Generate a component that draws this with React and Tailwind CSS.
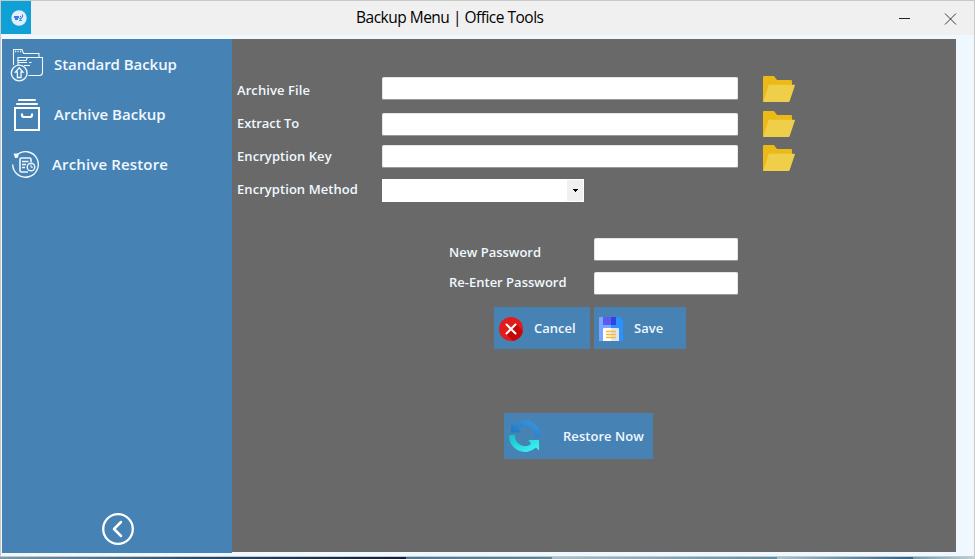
import React from "react";

function StandardBackupIcon() {
  return (
    <svg width="34" height="34" viewBox="0 0 34 34" fill="none" stroke="#f0f8ff" strokeWidth="1.100">
      <path d="M3.500 17V1.500H12L13.500 5.500H29V9" />
      <path d="M8 17V9.500H32.500V24.500Q32.500 27.500 29.500 27.500H18.500" />
      <path d="M5 3.500H6.200M7.500 3.500H8.700M10 3.500H11.200" strokeWidth="1.400" />
      <path d="M7.500 12.500H16L17.500 9.500M8 14.500H17M19 14.500H21.500M9.500 17.500H13M14 17.500H20" />
      <circle cx="9.200" cy="25" r="7.900" fill="#4682b4" strokeWidth="1.400" />
      <path d="M9.200 19.700L13 24H11V29.500H7.400V24H5.400Z" strokeWidth="1.300" />
    </svg>
  );
}

function ArchiveBoxIcon() {
  return (
    <svg width="28" height="34" viewBox="0 0 28 34" fill="none" stroke="#fff" strokeWidth="2">
      <path d="M6 2H22M4 6H24" strokeLinecap="round" />
      <path d="M2 10H26V32H2Z" />
      <path d="M9 15.500V17Q9 19 11 19H17Q19 19 19 17V15.500" strokeWidth="2.200" />
    </svg>
  );
}

function RestoreHistoryIcon() {
  return (
    <svg width="29" height="29" viewBox="0 0 29 29" fill="none" stroke="#f0f8ff" strokeWidth="1.400">
      <path d="M5.500 5.300A12.800 12.800 0 1 1 1.700 14.500" />
      <path d="M3.500 4.200L7 4.300L6.400 7L4.500 7.200Z" fill="#f0f8ff" />
      <path d="M20 12V9.500Q20 8 18.500 8H10.500Q9 8 9 9.500V20.500Q9 22 10.500 22H17" strokeWidth="1.600" />
      <path d="M11 11.500H17.500M11 14.500H15M11 17.500H14" />
      <circle cx="20" cy="17" r="3.800" fill="#4682b4" strokeWidth="1.400" />
      <path d="M20 14.500V17.200H22" strokeWidth="1" />
    </svg>
  );
}

function FolderIcon() {
  return (
    <svg width="32" height="26" viewBox="0 0 32 26" className="block">
      <path d="M0 1Q0 0 1 0H11L14 4H28Q29 4 29 5V10L3 25L0 26Z" fill="#ebba16" />
      <path d="M6.200 8.800H31.500Q32.200 8.800 31.900 9.600L26.600 25.200Q26.300 26 25.500 26H0.300L5.400 9.500Q5.600 8.800 6.200 8.800Z" fill="#efce4a" />
    </svg>
  );
}

function CancelIcon() {
  return (
    <svg width="24" height="24" viewBox="0 0 24 24">
      <circle cx="12" cy="12" r="12" fill="#e21b1b" />
      <path d="M17 7L24 14A12 12 0 0 1 14 23.900L7 17Z" fill="#c40808" />
      <path d="M7.500 7.500L16.500 16.500M16.500 7.500L7.500 16.500" stroke="#fff" strokeWidth="2" strokeLinecap="round" />
    </svg>
  );
}

function SaveIcon() {
  return (
    <svg width="24" height="24" viewBox="0 0 24 24">
      <path d="M0 0H12V24H0Z" fill="#77a5ff" />
      <path d="M12 0H20.500L24 3.500V24H12Z" fill="#2b91ff" />
      <path d="M4 0H12V8H4Z" fill="#5c5af0" />
      <path d="M12 0H17V8H12Z" fill="#3443df" />
      <path d="M4 12Q4 11 5 11H12V24H4Z" fill="#fff" />
      <path d="M12 11H19Q20 11 20 12V24H12Z" fill="#dfe4f3" />
      <path d="M7 14.500H17M7 17.500H17M7 20.500H17" stroke="#fdb92a" strokeWidth="1.500" />
    </svg>
  );
}

function SyncIcon() {
  return (
    <svg width="32" height="32" viewBox="0 0 32 32">
      <defs>
        <linearGradient id="syncTop" x1="0" y1="1" x2="1" y2="0">
          <stop offset="0" stopColor="#1c72b8" />
          <stop offset="1" stopColor="#3d9be6" />
        </linearGradient>
        <linearGradient id="syncBottom" x1="0" y1="0" x2="1" y2="1">
          <stop offset="0" stopColor="#14bfc4" />
          <stop offset="1" stopColor="#42f7fb" />
        </linearGradient>
      </defs>
      <path d="M2 2.500L5 5A16 16 0 0 1 32 17H26A10 10 0 0 0 9.500 8.500L12.500 12.500H2Z" fill="url(#syncTop)" />
      <path d="M0 15H6A10 10 0 0 0 22 24L19.500 20H30V30.500L27 27.500A16 16 0 0 1 0 15Z" fill="url(#syncBottom)" />
    </svg>
  );
}

function AppLogo() {
  return (
    <svg width="16" height="16" viewBox="0 0 16 16">
      <circle cx="8" cy="8" r="7.700" fill="#e1eefe" />
      <path d="M3 6H8V8H7V10H4V8H3Z" fill="#397be8" />
      <path d="M9 6H10V7H9ZM11 4.500H12V7.500H9.500V6.800H11Z" fill="#4c70ef" />
      <path d="M8 8H11V9H10V10H11V11H8V10H9V9H8Z" fill="#18a7e5" />
    </svg>
  );
}

function NavItem({ icon, text, className }) {
  return (
    <button className="flex h-[50px] w-full items-center pl-2 text-left">
      <span className="flex w-[34px] shrink-0 items-center">{icon}</span>
      <span className={`${className} whitespace-nowrap text-[15px] font-semibold leading-none`}>{text}</span>
    </button>
  );
}

function TextBox({ className }) {
  return (
    <input
      className={`${className} block h-[23px] rounded-[2px] border border-[#e6e6e6] border-b-[#9a9a9a] bg-white outline-none`}
    />
  );
}

function Label({ children, className }) {
  return <div className={`${className} flex items-center whitespace-nowrap text-[13px] font-semibold leading-none`}>{children}</div>;
}

export default function App() {
  return (
    <div className="flex h-[559px] w-[975px] flex-col overflow-hidden bg-[#6d8ea3] font-['Open_Sans','Noto_Sans',sans-serif] text-[#f0f8ff]">
      <div className="flex h-[557px] flex-col border border-[#c8c8c8] bg-[#f0f8ff]">
        <header className="flex h-[34px] shrink-0 bg-[#f0f0f0] text-black">
          <div className="flex h-[33px] w-[30px] items-center justify-center bg-[#0fa1d5] pl-[5px]">
            <AppLogo />
          </div>
          <div className="flex flex-1 items-center pl-[325px] text-[15.5px] tracking-[-0.5px]">
            Backup Menu | Office Tools
          </div>
          <svg className="mr-[15px] mt-[12px]" width="60" height="13" viewBox="0 0 60 13" stroke="#222" fill="none">
            <path d="M0 5.500H11" />
            <path d="M46 0.500L57 11.500M57 0.500L46 11.500" strokeWidth="0.900" />
          </svg>
        </header>
        <div className="flex flex-1 pl-px pr-[18px] pt-1">
          <aside className="flex h-[514px] w-[230px] shrink-0 flex-col justify-between bg-[#4682b4]">
            <nav>
              <NavItem icon={<span className="pt-px"><StandardBackupIcon /></span>} text="Standard Backup" className="ml-2.5 tracking-[-0.05px]" />
              <NavItem icon={<span className="pl-[3px] pt-0.5"><ArchiveBoxIcon /></span>} text="Archive Backup" className="ml-2.5" />
              <NavItem icon={<span className="pl-px pt-px"><RestoreHistoryIcon /></span>} text="Archive Restore" className="ml-2 tracking-[0.15px]" />
            </nav>
            <button className="mb-2 ml-[100px] w-8">
              <svg width="32" height="32" viewBox="0 0 32 32" fill="none" stroke="#fff" strokeWidth="2.300">
                <circle cx="16" cy="16" r="14.800" />
                <path d="M19 9L12 16L19 23" strokeWidth="2.500" strokeLinecap="round" strokeLinejoin="round" />
              </svg>
            </button>
          </aside>
          <main className="h-[513px] flex-1 bg-[#696969] pl-[5px] pt-[35px]">
            <section className="flex h-[161px]">
              <div className="w-[145px]">
                <Label className="h-[33px] tracking-[0.08px]">Archive File</Label>
                <Label className="h-[33px] tracking-[-0.08px]">Extract To</Label>
                <Label className="h-[33px] tracking-[0.07px]">Encryption Key</Label>
                <Label className="h-[33px] tracking-[0.06px]">Encryption Method</Label>
              </div>
              <div className="w-[381px] pt-[3px]">
                <TextBox className="w-[356px]" />
                <TextBox className="mt-[13px] w-[356px]" />
                <TextBox className="mt-[9px] w-[356px]" />
                <div className="mt-[11px] flex h-[23px] w-[202px] justify-end bg-white p-px">
                  <div className="flex w-4 items-center justify-center bg-[#f0f0f0]">
                    <svg width="5" height="3" viewBox="0 0 5 3" shapeRendering="crispEdges">
                      <path d="M0 0H5V1H4V2H3V3H2V2H1V1H0Z" fill="#000" />
                    </svg>
                  </div>
                </div>
              </div>
              <div className="pt-0.5">
                <FolderIcon />
                <div className="mt-[9px]"><FolderIcon /></div>
                <div className="mt-2"><FolderIcon /></div>
              </div>
            </section>
            <section className="ml-[212px] flex h-[72px]">
              <div className="w-[145px] pt-0.5">
                <Label className="h-[30px]">New Password</Label>
                <Label className="h-[30px]">Re-Enter Password</Label>
              </div>
              <div className="pt-[3px]">
                <TextBox className="w-36" />
                <TextBox className="mt-[11px] w-36" />
              </div>
            </section>
            <div className="ml-[257px] flex gap-1 text-[13px] font-semibold">
              <button className="flex h-[42px] w-24 items-center bg-[#4682b4] pl-[5px] pt-0.5">
                <CancelIcon />
                <span className="ml-[11px]">Cancel</span>
              </button>
              <button className="flex h-[42px] w-[92px] items-center bg-[#4682b4] pl-[5px] pt-0.5">
                <SaveIcon />
                <span className="ml-[11px]">Save</span>
              </button>
            </div>
            <button className="ml-[267px] mt-16 flex h-[46px] w-[149px] items-center bg-[#4682b4] pl-[5px] text-[13px] font-semibold">
              <SyncIcon />
              <span className="ml-[22px] whitespace-nowrap pt-[2px] tracking-[0.05px]">Restore Now</span>
            </button>
          </main>
        </div>
      </div>
      <div className="flex h-0.5">
        <div className="w-[406px] bg-linear-to-r from-[#7b9baa] via-[#254b6b] to-[#171c35]" />
        <div className="w-[146px] bg-linear-to-r from-[#517892] to-[#638596]" />
        <div className="w-[225px] bg-linear-to-r from-[#a9c0c9] to-[#638da1]" />
        <div className="w-[136px] bg-linear-to-r from-[#a9c2ca] to-[#315f84]" />
        <div className="flex-1 bg-linear-to-r from-[#6f9aac] to-[#c0d0d6]" />
      </div>
    </div>
  );
}
